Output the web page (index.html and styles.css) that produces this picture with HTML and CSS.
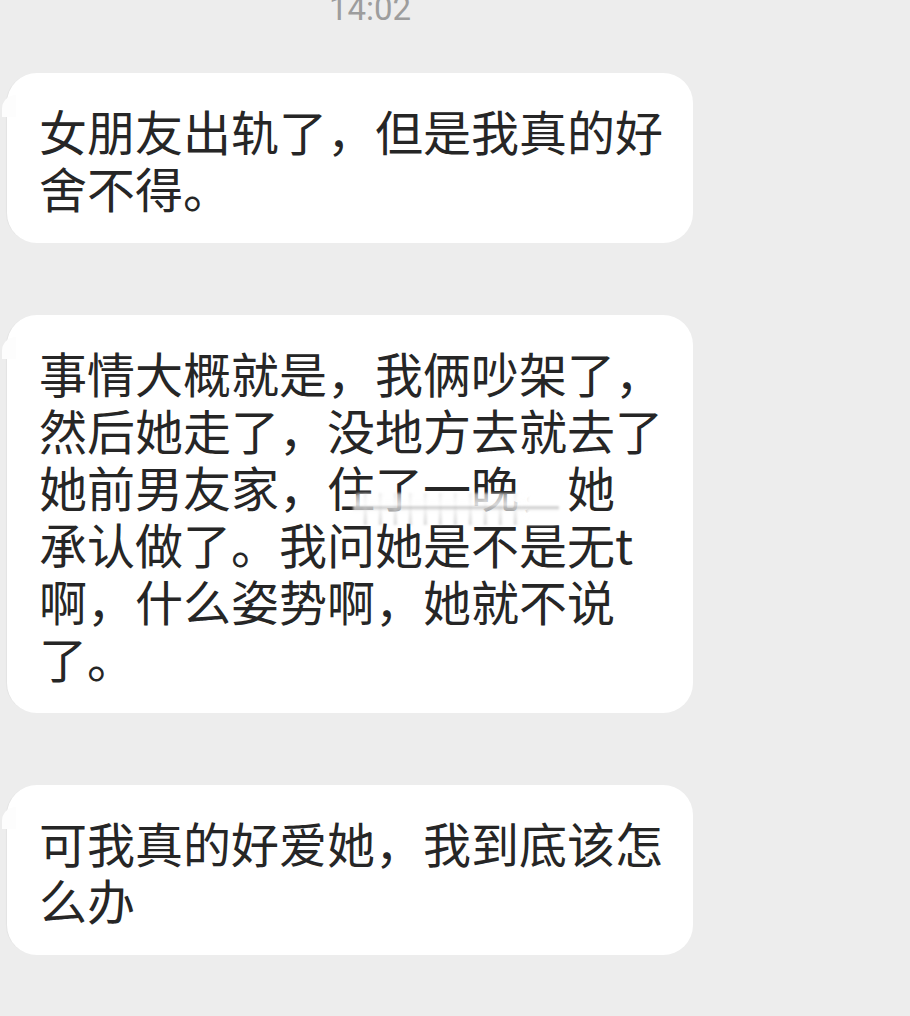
FILE: index.html
```html
<!DOCTYPE html>
<html lang="zh-CN">
<head>
<meta charset="utf-8">
<title>聊天</title>
<link rel="stylesheet" href="styles.css">
</head>
<body>
<div class="chat">
  <div class="time">14:02</div>
  <div class="bubble">女朋友出轨了，但是我真的好<br>舍不得。</div>
  <div class="bubble">事情大概就是，我俩吵架了，<br>然后她走了，没地方去就去了<br>她前男友家，住了一晚，她<br>承认做了。我问她是不是无t<br>啊，什么姿势啊，她就不说<br>了。<span class="watermark"></span></div>
  <div class="bubble">可我真的好爱她，我到底该怎<br>么办</div>
</div>
</body>
</html>
```

FILE: styles.css
```css
html, body {
  margin: 0;
  padding: 0;
  background: #ededed;
}

.chat {
  width: 910px;
  height: 1016px;
  overflow: hidden;
  display: flex;
  flex-direction: column;
  align-items: flex-start;
  gap: 72px;
}

.time {
  align-self: stretch;
  margin: -8px 170px -24px 0;
  text-align: center;
  font-family: Roboto, "Liberation Sans", sans-serif;
  font-size: 33px;
  line-height: 33px;
  color: #9d9d9d;
}

.bubble {
  position: relative;
  box-sizing: border-box;
  width: 686px;
  margin-left: 7px;
  padding: 29px 28px 27px 32px;
  background: #ffffff;
  border-radius: 30px;
  font-family: "Noto Sans CJK SC", "Noto Sans", sans-serif;
  font-size: 48px;
  line-height: 57px;
  color: #262626;
  box-shadow: -2px 0 1px -1px rgba(0, 0, 0, 0.04);
}

.bubble::before {
  content: "";
  position: absolute;
  left: -5px;
  top: 22px;
  width: 14px;
  height: 22px;
  background: #fdfdfd;
  border-radius: 14px 0 0 0;
}

.watermark {
  position: absolute;
  left: 346px;
  top: 178px;
  width: 206px;
  height: 32px;
  border-radius: 6px;
  background:
    linear-gradient(to bottom, rgba(255,255,255,0) 0, rgba(255,255,255,0) 13px, rgba(140,140,140,0.6) 14px, rgba(190,190,190,0.35) 16px, rgba(255,255,255,0) 18px),
    linear-gradient(to right, rgba(255,255,255,0) 0, rgba(255,255,255,0) 168px, #ffffff 176px, #ffffff 206px),
    linear-gradient(to bottom, rgba(255,255,255,0.55) 0, rgba(255,255,255,0.85) 12px, rgba(255,255,255,0) 30px),
    repeating-linear-gradient(to right, rgba(255,255,255,0) 0, rgba(255,255,255,0) 10px, rgba(160,160,160,0.45) 12px, rgba(255,255,255,0) 15px);
  filter: blur(1.2px);
}
```
